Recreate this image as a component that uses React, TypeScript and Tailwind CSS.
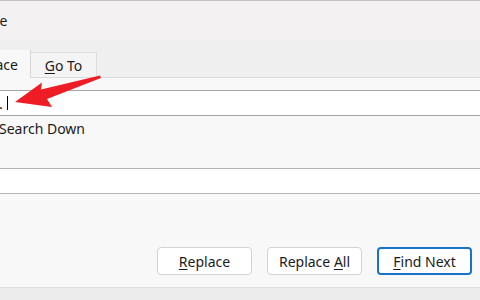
import React from 'react'

function DialogButton({ label, hot, primary }: { label: string; hot: number; primary?: boolean }) {
  const before = label.slice(0, hot)
  const key = label.slice(hot, hot + 1)
  const after = label.slice(hot + 1)
  return (
    <button
      className={
        'h-[28px] w-[95px] rounded-[4px] bg-white text-[14px] text-[#1b1b1b] ' +
        (primary ? 'border-2 border-[#1a73c8]' : 'border border-[#d3d3d3]')
      }
    >
      {before}
      <span className="underline underline-offset-2">{key}</span>
      {after}
    </button>
  )
}

export default function App() {
  return (
    <div
      className="relative w-[480px] h-[300px] overflow-hidden bg-[#f8f8f8] text-[#1b1b1b]"
      style={{ fontFamily: '"Noto Sans", "Open Sans", sans-serif' }}
    >
      <div className="h-px bg-[#c4c4c4]" />
      <div className="h-[39px] bg-[#f3f1f1] flex items-center overflow-hidden">
        <span className="ml-[-44px] text-[14px]">Replace</span>
      </div>

      <div className="h-[38px] bg-[#efefef] flex items-end border-b border-[#dcdcdc]">
        <div className="h-[28px] w-[31px] -mb-px bg-[#f8f8f8] border-r border-[#d6d6d6] flex items-center justify-end pr-[12px] overflow-hidden">
          <span className="text-[14px]">ace</span>
        </div>
        <div className="h-[25px] w-[66px] bg-[#f4f4f4] border-t border-r border-[#dcdcdc] flex items-center justify-center text-[14px]">
          <span>
            <span className="underline underline-offset-2">G</span>o To
          </span>
        </div>
      </div>

      <div className="pt-[12px]">
        <div className="h-[26px] bg-white border-y border-[#a6a6a6] flex items-center">
          <span className="ml-[-1px] text-[14px]">.</span>
          <span className="ml-[4px] w-px h-[14px] bg-black" />
        </div>
        <div className="h-[25px] flex items-center text-[14px]">
          <span className="ml-[-1px]">Search Down</span>
        </div>
      </div>

      <div className="pt-[27px]">
        <div className="h-[26px] bg-white border-y border-[#b4b4b4]" />
      </div>

      <div className="pt-[53px] flex justify-end gap-[15px] pr-[8px]">
        <DialogButton label="Replace" hot={0} />
        <DialogButton label="Replace All" hot={8} />
        <DialogButton label="Find Next" hot={0} primary />
      </div>

      <div className="mt-[12px] h-[14px] border-t border-[#e0e0e0] bg-[#ececec] overflow-hidden">
        <div className="mt-[7px] pl-[28px] text-[14px] font-bold text-[#333] whitespace-nowrap">
          with this and that the find the last word and then the search to find the text in the document
        </div>
      </div>

      <svg className="absolute left-0 top-0" width="480" height="300" viewBox="0 0 480 300">
        <polygon
          points="15,102 42,82.5 41,89.5 100,75.5 101,78 47,99 52,107"
          fill="#ee1c24"
        />
      </svg>
    </div>
  )
}
